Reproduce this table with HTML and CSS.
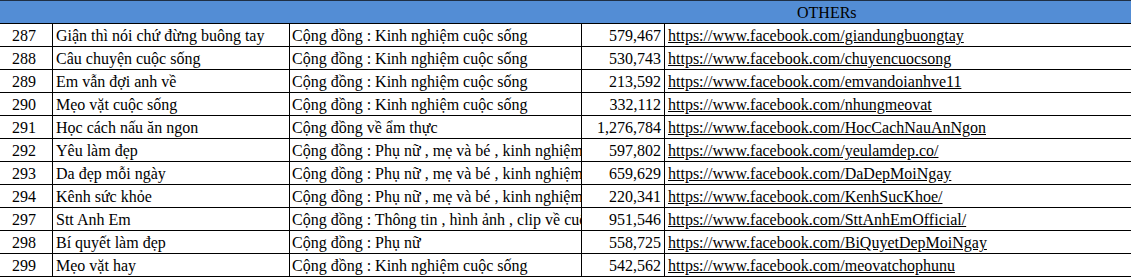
FILE: index.html
```html
<!DOCTYPE html>
<html lang="vi">
<head>
<meta charset="utf-8">
<title>OTHERs</title>
<link rel="stylesheet" href="styles.css">
</head>
<body>
<div class="sheet">
  <div class="head"><span class="head-title">OTHERs</span></div>
  <div class="row"><div class="c num">287</div><div class="c name">Giận thì nói chứ đừng buông tay</div><div class="c cat">Cộng đồng : Kinh nghiệm cuộc sống</div><div class="c fans">579,467</div><div class="c link"><a href="#">https://www.facebook.com/giandungbuongtay</a></div></div>
  <div class="row"><div class="c num">288</div><div class="c name">Câu chuyện cuộc sống</div><div class="c cat">Cộng đồng : Kinh nghiệm cuộc sống</div><div class="c fans">530,743</div><div class="c link"><a href="#">https://www.facebook.com/chuyencuocsong</a></div></div>
  <div class="row"><div class="c num">289</div><div class="c name">Em vẫn đợi anh về</div><div class="c cat">Cộng đồng : Kinh nghiệm cuộc sống</div><div class="c fans">213,592</div><div class="c link"><a href="#">https://www.facebook.com/emvandoianhve11</a></div></div>
  <div class="row"><div class="c num">290</div><div class="c name">Mẹo vặt cuộc sống</div><div class="c cat">Cộng đồng : Kinh nghiệm cuộc sống</div><div class="c fans">332,112</div><div class="c link"><a href="#">https://www.facebook.com/nhungmeovat</a></div></div>
  <div class="row"><div class="c num">291</div><div class="c name">Học cách nấu ăn ngon</div><div class="c cat">Cộng đồng về ẩm thực</div><div class="c fans">1,276,784</div><div class="c link"><a href="#">https://www.facebook.com/HocCachNauAnNgon</a></div></div>
  <div class="row"><div class="c num">292</div><div class="c name">Yêu làm đẹp</div><div class="c cat">Cộng đồng : Phụ nữ , mẹ và bé , kinh nghiệm cuộc sống</div><div class="c fans">597,802</div><div class="c link"><a href="#">https://www.facebook.com/yeulamdep.co/</a></div></div>
  <div class="row"><div class="c num">293</div><div class="c name">Da đẹp mỗi ngày</div><div class="c cat">Cộng đồng : Phụ nữ , mẹ và bé , kinh nghiệm cuộc sống</div><div class="c fans">659,629</div><div class="c link"><a href="#">https://www.facebook.com/DaDepMoiNgay</a></div></div>
  <div class="row"><div class="c num">294</div><div class="c name">Kênh sức khỏe</div><div class="c cat">Cộng đồng : Phụ nữ , mẹ và bé , kinh nghiệm cuộc sống</div><div class="c fans">220,341</div><div class="c link"><a href="#">https://www.facebook.com/KenhSucKhoe/</a></div></div>
  <div class="row"><div class="c num">297</div><div class="c name">Stt Anh Em</div><div class="c cat">Cộng đồng : Thông tin , hình ảnh , clip về cuộc sống</div><div class="c fans">951,546</div><div class="c link"><a href="#">https://www.facebook.com/SttAnhEmOfficial/</a></div></div>
  <div class="row"><div class="c num">298</div><div class="c name">Bí quyết làm đẹp</div><div class="c cat">Cộng đồng : Phụ nữ</div><div class="c fans">558,725</div><div class="c link"><a href="#">https://www.facebook.com/BiQuyetDepMoiNgay</a></div></div>
  <div class="row"><div class="c num">299</div><div class="c name">Mẹo vặt hay</div><div class="c cat">Cộng đồng : Kinh nghiệm cuộc sống</div><div class="c fans">542,562</div><div class="c link"><a href="#">https://www.facebook.com/meovatchophunu</a></div></div>
</div>
</body>
</html>
```
FILE: styles.css
```css
html, body {
  margin: 0;
  padding: 0;
  background: #ffffff;
}
body {
  font-family: "Liberation Serif", "Times New Roman", serif;
  font-size: 16px;
  color: #000;
  overflow: hidden;
}
.sheet {
  width: 1131px;
}
.head {
  height: 22px;
  background: #538dd5;
  border-top: 1px solid #1f2f44;
  border-bottom: 1px solid #000;
  box-sizing: content-box;
  display: flex;
  align-items: flex-end;
}
.head-title {
  padding-left: 797px;
  line-height: 20px;
}
.row {
  display: grid;
  grid-template-columns: 52px 237px 292px 83px 1fr;
  height: 22px;
  border-bottom: 1px solid #000;
}
.c {
  overflow: hidden;
  white-space: nowrap;
  line-height: 20px;
  padding-top: 2px;
  box-sizing: border-box;
  height: 22px;
}
.c + .c {
  border-left: 1px solid #000;
}
.num {
  text-align: center;
  padding-right: 4px;
}
.name, .link {
  padding-left: 3px;
}
.cat {
  padding-left: 2px;
}
.fans {
  text-align: right;
  padding-right: 3px;
}
.link a {
  color: #000;
  text-decoration: underline;
}
```
